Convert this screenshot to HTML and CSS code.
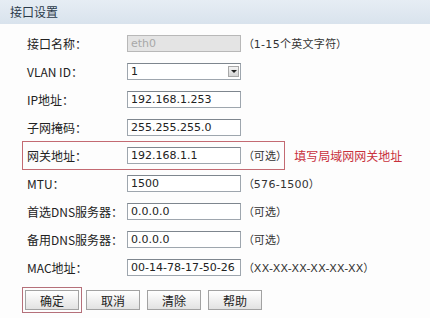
FILE: index.html
```html
<!DOCTYPE html>
<html lang="zh-CN">
<head>
    <meta charset="UTF-8">
    <title>接口设置</title>
    <link rel="stylesheet" href="styles.css">
</head>
<body>

<div class="panel">
    <div class="panel-title">接口设置</div>
    <div class="form">
        <div class="row">
            <span class="label">接口名称：</span>
            <input class="field" type="text" value="eth0" disabled>
            <span class="hint">（1-15个英文字符）</span>
        </div>
        <div class="row">
            <span class="label">VLAN ID：</span>
            <div class="select">
                <span class="select-value">1</span>
                <span class="select-arrow"></span>
            </div>
        </div>
        <div class="row">
            <span class="label">IP地址：</span>
            <input class="field" type="text" value="192.168.1.253">
        </div>
        <div class="row">
            <span class="label">子网掩码：</span>
            <input class="field" type="text" value="255.255.255.0">
        </div>
        <div class="row">
            <div class="mark">
                <span class="label">网关地址：</span>
                <input class="field" type="text" value="192.168.1.1">
                <span class="hint">（可选）</span>
            </div>
            <span class="note">填写局域网网关地址</span>
        </div>
        <div class="row">
            <span class="label">MTU：</span>
            <input class="field" type="text" value="1500">
            <span class="hint">（576-1500）</span>
        </div>
        <div class="row">
            <span class="label">首选DNS服务器：</span>
            <input class="field" type="text" value="0.0.0.0">
            <span class="hint">（可选）</span>
        </div>
        <div class="row">
            <span class="label">备用DNS服务器：</span>
            <input class="field" type="text" value="0.0.0.0">
            <span class="hint">（可选）</span>
        </div>
        <div class="row">
            <span class="label">MAC地址：</span>
            <input class="field" type="text" value="00-14-78-17-50-26">
            <span class="hint">（XX-XX-XX-XX-XX-XX）</span>
        </div>
        <div class="buttons">
            <button class="btn btn-marked">确定</button>
            <button class="btn">取消</button>
            <button class="btn">清除</button>
            <button class="btn">帮助</button>
        </div>
    </div>
</div>

</body>
</html>
```

FILE: styles.css
```css
body {
    margin: 0;
    background-color: #fdfdfd;
    font-family: "DejaVu Sans", "Noto Sans CJK SC", sans-serif;
    font-size: 12px;
    color: #333;
}
.panel {
    width: 430px;
    height: 318px;
    overflow: hidden;
}
.panel-title {
    height: 24px;
    line-height: 24px;
    padding-left: 10px;
    background: linear-gradient(#e6edf4, #d9e3ed);
    font-family: "Noto Sans CJK SC", sans-serif;
    font-size: 12px;
    color: #2b3a4a;
}
.form {
    padding: 5px 0 0 22px;
}
.row {
    display: flex;
    align-items: center;
    height: 28px;
    white-space: nowrap;
}
.label {
    flex-shrink: 0;
    width: 100px;
    padding-left: 5px;
    font-family: "Noto Sans CJK SC", sans-serif;
    font-size: 12px;
    color: #222;
}
.field {
    flex-shrink: 0;
    width: 114px;
    height: 17px;
    box-sizing: border-box;
    margin: 0;
    padding: 0 3px;
    border: 1px solid #9ea6ae;
    border-top-color: #7e868e;
    background-color: #fff;
    font-family: "DejaVu Sans", sans-serif;
    font-size: 11px;
    color: #222;
}
.field:disabled {
    background-color: #e4e4e4;
    border-color: #b8b8b8;
    color: #a8a8a8;
}
.select {
    display: flex;
    align-items: center;
    width: 114px;
    height: 17px;
    box-sizing: border-box;
    border: 1px solid #9ea6ae;
    border-top-color: #7e868e;
    background-color: #fff;
}
.select-value {
    flex: 1;
    padding-left: 3px;
    font-size: 11px;
    color: #222;
}
.select-arrow {
    width: 11px;
    height: 11px;
    margin-right: 1px;
    border: 1px solid #a8a8a8;
    box-sizing: border-box;
    background: linear-gradient(#f4f4f4, #d4d4d4);
    position: relative;
}
.select-arrow::after {
    content: "";
    position: absolute;
    left: 2px;
    top: 3px;
    border-left: 3px solid transparent;
    border-right: 3px solid transparent;
    border-top: 3px solid #222;
}
.hint {
    flex-shrink: 0;
    margin-left: 7px;
    font-family: "DejaVu Sans", "Noto Sans CJK SC", sans-serif;
    font-size: 11px;
    font-feature-settings: "palt";
    letter-spacing: 0.3px;
    color: #333;
}
.mark {
    display: flex;
    align-items: center;
    height: 27px;
    padding-right: 2px;
    border: 1px solid #c36a72;
}
.mark .label {
    padding-left: 4px;
}
.note {
    margin-left: 9px;
    font-family: "Noto Sans CJK SC", sans-serif;
    font-size: 12px;
    color: #c8303c;
}
.buttons {
    display: flex;
    gap: 7px;
    margin-top: 9px;
    padding-left: 3px;
}
.btn {
    width: 54px;
    height: 20px;
    padding: 0;
    border: 1px solid #a2a2a2;
    border-radius: 0;
    background: linear-gradient(#ffffff, #e2e2e2);
    font-family: "Noto Sans CJK SC", sans-serif;
    font-size: 12px;
    color: #222;
}
.btn-marked {
    outline: 1px solid #b5707a;
    outline-offset: 2px;
}
```
